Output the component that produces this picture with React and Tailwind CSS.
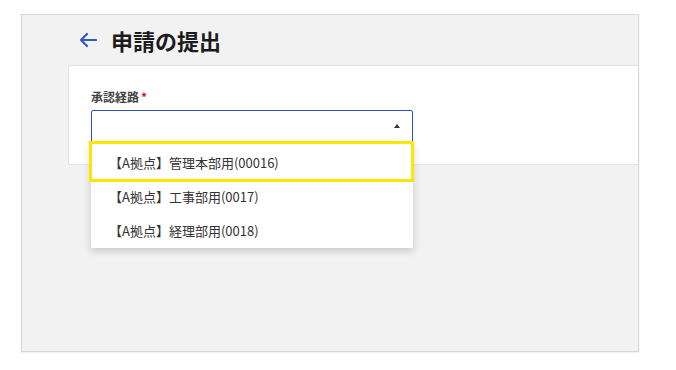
export default function App() {
  const font = { fontFamily: '"Noto Sans CJK JP", "Noto Sans", sans-serif' };
  const items = ["【A拠点】管理本部用(00016)", "【A拠点】工事部用(0017)", "【A拠点】経理部用(0018)"];
  return (
    <div className="w-[676px] h-[370px] bg-white pt-[14px] pl-[21px]" style={font}>
      <div className="w-[618px] h-[338px] border border-[#d8d8d8] bg-[#f2f2f2] overflow-hidden shadow-[0_1px_2px_rgba(0,0,0,0.08)] flex flex-col">
        <div className="flex items-center gap-[14px] h-[28px] mt-[11px] pl-[57px]">
          <svg width="18" height="16" viewBox="0 0 18 16">
            <path d="M8 2 L2 8 L8 14 M2 8 H17" fill="none" stroke="#3556c8" strokeWidth="2.2" strokeLinecap="round" strokeLinejoin="round" />
          </svg>
          <span className="text-[22px] font-bold text-[#1c1c1c] leading-none">申請の提出</span>
        </div>
        <div className="ml-[46px] mt-[11px] w-[620px] h-[100px] bg-white border border-[#e2e2e2] rounded-[2px] pl-[22px] pt-[24px] flex flex-col gap-[6px]">
          <div className="flex items-center h-[14px] text-[12px] font-bold text-[#444]">
            承認経路<span className="text-[#d0103a] ml-[2px]">*</span>
          </div>
          <div className="relative w-[322px]">
            <div className="h-[34px] border-[1.5px] border-[#2f4fd0] rounded-t-[2px] bg-white flex items-center justify-end pr-[12px]">
              <div className="w-0 h-0 border-l-[3.5px] border-r-[3.5px] border-b-[4px] border-l-transparent border-r-transparent border-b-[#333] mt-[-2px]" />
            </div>
            <div className="absolute left-0 top-[32px] w-[322px] bg-white shadow-[0_3px_8px_rgba(0,0,0,0.18)] pt-[4px] z-10 flex flex-col">
              {items.map((t) => (
                <div key={t} className="h-[34px] flex items-center pl-[18px] text-[13px] text-[#333]">
                  {t}
                </div>
              ))}
            </div>
            <div className="absolute left-[-2px] top-[31px] w-[325px] h-[41px] border-[3px] border-[#ffe500] z-20" />
          </div>
        </div>
      </div>
    </div>
  );
}
